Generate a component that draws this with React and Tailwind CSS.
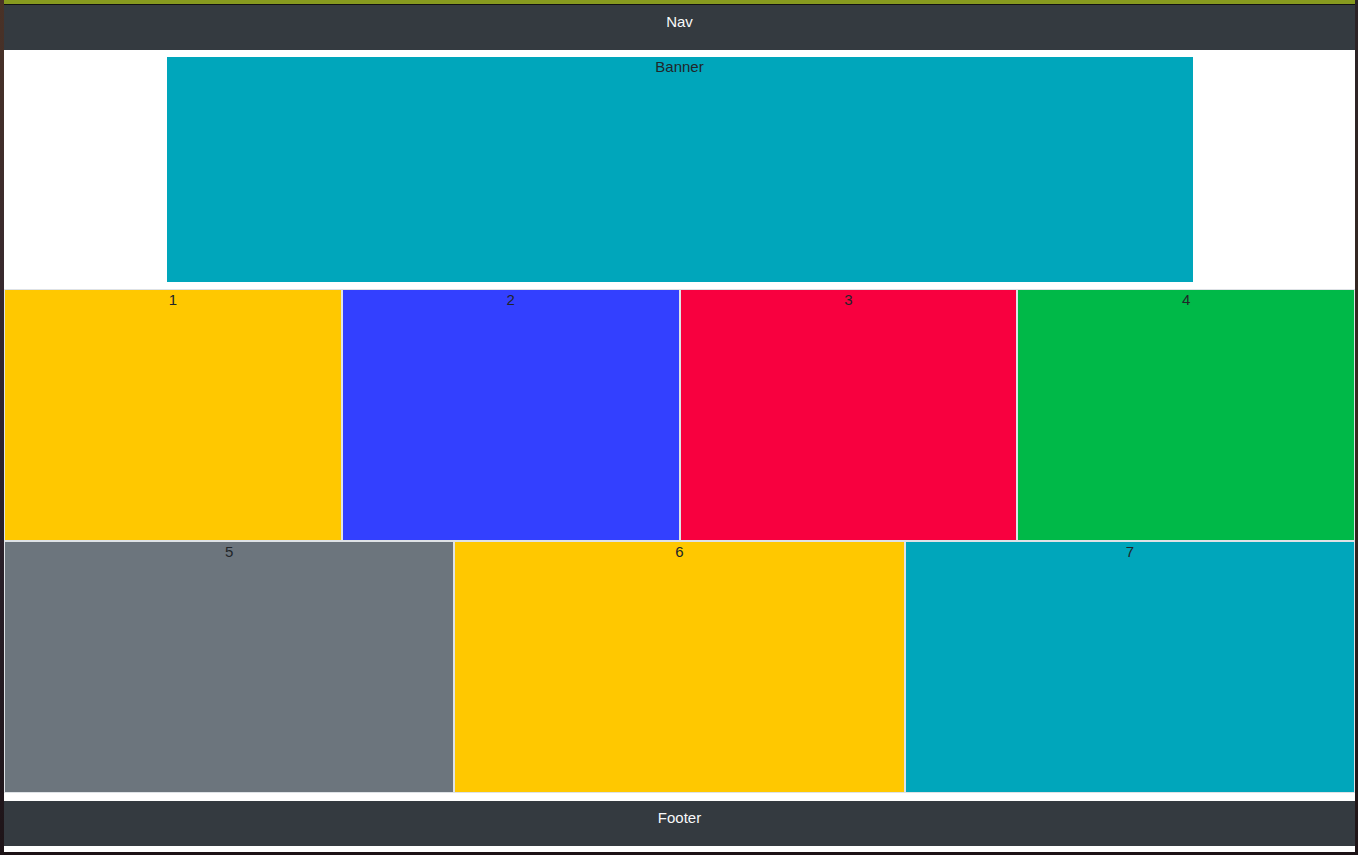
import React from 'react';

const topRow = [
  { label: '1', bg: 'bg-[#ffc800]' },
  { label: '2', bg: 'bg-[#3340ff]' },
  { label: '3', bg: 'bg-[#f8003f]' },
  { label: '4', bg: 'bg-[#00b948]' },
];

const bottomRow = [
  { label: '5', bg: 'bg-[#6c757d]' },
  { label: '6', bg: 'bg-[#ffc800]' },
  { label: '7', bg: 'bg-[#00a6bb]' },
];

const Cell = ({ label, bg }) => (
  <div className={`${bg} h-[252px] border border-[#dee2e6] text-center text-[#212529] leading-5`}>
    {label}
  </div>
);

const App = () => {
  return (
    <div
      className="flex w-full h-[855px] bg-[#1c1216] overflow-hidden"
      style={{ fontFamily: '"Liberation Sans", Arial, sans-serif', fontSize: '15px' }}
    >
      {/* wallpaper strip left */}
      <div className="w-[4px] shrink-0 bg-gradient-to-b from-[#4a3226] via-[#2e2430] to-[#1e1418]" />

      <div className="w-[1351px] shrink-0 flex flex-col">
        <div className="h-[4px] bg-[#879a1f]" />
        <div className="h-[1px] bg-[#111111]" />

        <div className="bg-white flex flex-col">
          <nav className="h-[45px] bg-[#343a40] text-[#f8f9fa] text-center pt-[7px] leading-5">
            Nav
          </nav>

          <div className="flex justify-center pt-[7px] pb-[7px]">
            <div className="w-[1026px] h-[225px] bg-[#00a6bb] text-center text-[#212529] leading-5">
              Banner
            </div>
          </div>

          <div className="grid grid-cols-4">
            {topRow.map((c) => (
              <Cell key={c.label} {...c} />
            ))}
          </div>
          <div className="grid grid-cols-3">
            {bottomRow.map((c) => (
              <Cell key={c.label} {...c} />
            ))}
          </div>

          <div className="h-[8px]" />
          <footer className="h-[45px] bg-[#343a40] text-[#f8f9fa] text-center pt-[7px] leading-5">
            Footer
          </footer>
          <div className="h-[6px]" />
        </div>
      </div>

      {/* wallpaper strip right */}
      <div className="w-[3px] shrink-0 bg-gradient-to-b from-[#2a2226] via-[#3a2a20] to-[#1e1418]" />
    </div>
  );
};

export default App;
